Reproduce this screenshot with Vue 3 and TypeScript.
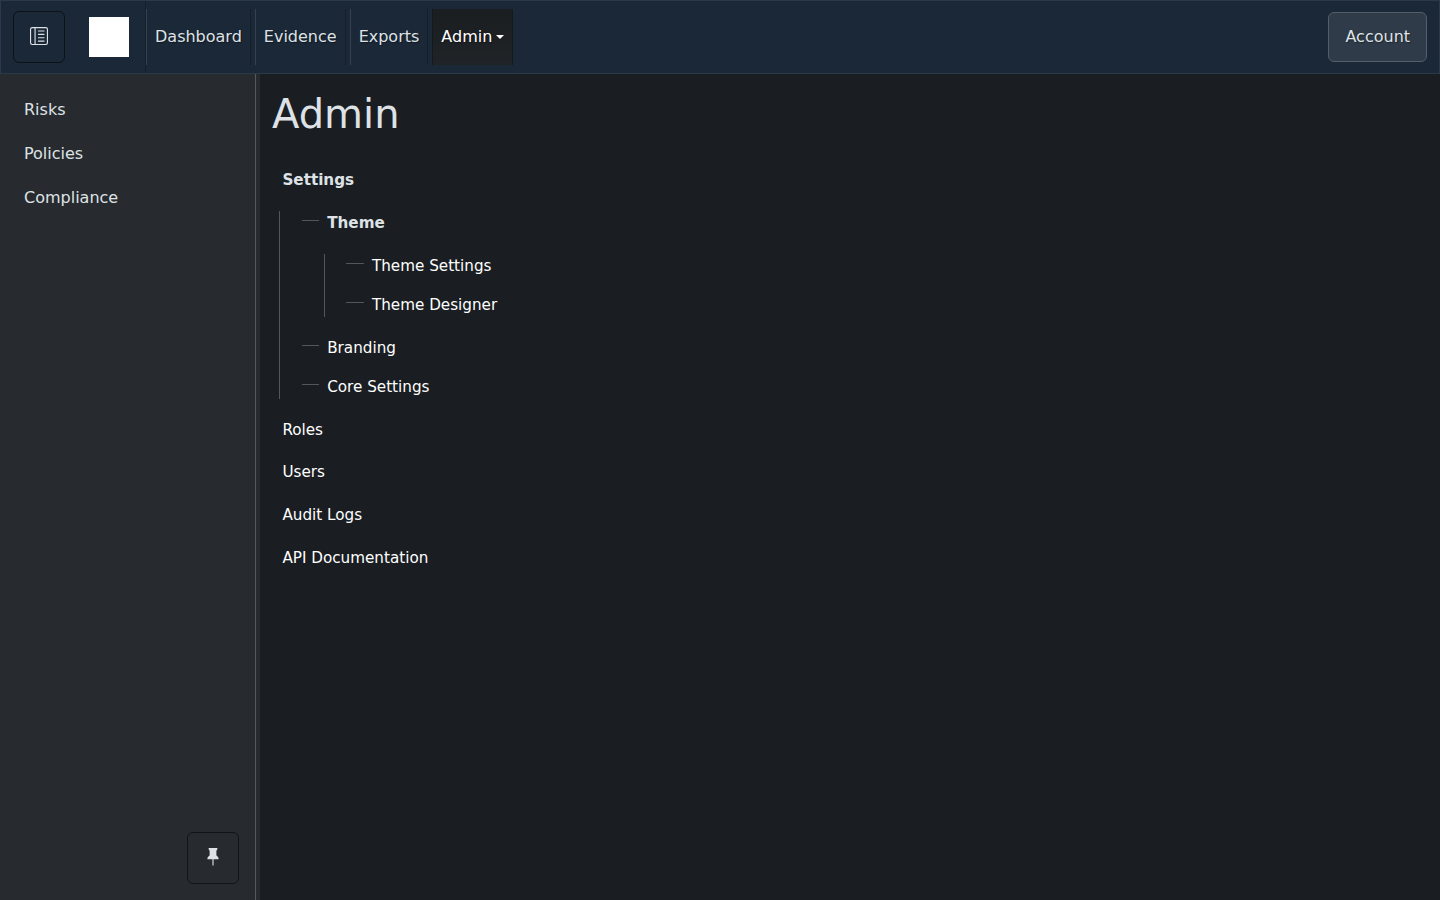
<script setup lang="ts">
interface NavItem { label: string; active?: boolean }
interface TreeRow { label: string; heading?: boolean; children?: TreeRow[] }

const nav: NavItem[] = [
  { label: 'Dashboard' },
  { label: 'Evidence' },
  { label: 'Exports' },
  { label: 'Admin', active: true },
]
const sidebar: string[] = ['Risks', 'Policies', 'Compliance']
const tree: TreeRow[] = [
  {
    label: 'Settings',
    heading: true,
    children: [
      { label: 'Theme', heading: true, children: [{ label: 'Theme Settings' }, { label: 'Theme Designer' }] },
      { label: 'Branding' },
      { label: 'Core Settings' },
    ],
  },
  { label: 'Roles' },
  { label: 'Users' },
  { label: 'Audit Logs' },
  { label: 'API Documentation' },
]
</script>

<template>
  <div class="app">
    <header class="navbar">
      <button class="icon-button" aria-label="Toggle sidebar">
        <svg viewBox="0 0 16 16" width="18" height="18" fill="currentColor">
          <path d="M12.5 3a.5.5 0 0 1 0 1h-5a.5.5 0 0 1 0-1zm0 3a.5.5 0 0 1 0 1h-5a.5.5 0 0 1 0-1zm.5 3.5a.5.5 0 0 0-.5-.5h-5a.5.5 0 0 0 0 1h5a.5.5 0 0 0 .5-.5m-.5 2.5a.5.5 0 0 1 0 1h-5a.5.5 0 0 1 0-1z" />
          <path d="M16 2a2 2 0 0 0-2-2H2a2 2 0 0 0-2 2v12a2 2 0 0 0 2 2h12a2 2 0 0 0 2-2zM4 1v14H2a1 1 0 0 1-1-1V2a1 1 0 0 1 1-1zm1 0h9a1 1 0 0 1 1 1v12a1 1 0 0 1-1 1H5z" />
        </svg>
      </button>
      <a class="brand"><span class="logo"></span></a>
      <nav class="nav">
        <a v-for="item in nav" :key="item.label" class="nav-link" :class="{ active: item.active }">
          {{ item.label }}<i v-if="item.active" class="caret"></i>
        </a>
      </nav>
      <button class="account">Account</button>
    </header>
    <div class="body">
      <aside class="sidebar">
        <div class="side-links">
          <a v-for="label in sidebar" :key="label">{{ label }}</a>
        </div>
        <button class="icon-button pin" aria-label="Pin sidebar">
          <svg viewBox="0 0 16 16" width="18" height="18" fill="currentColor">
            <path d="M4.146.146A.5.5 0 0 1 4.5 0h7a.5.5 0 0 1 .5.5c0 .68-.342 1.174-.646 1.479-.126.125-.25.224-.354.298v4.431l.078.048c.203.127.476.314.751.555C12.36 7.775 13 8.527 13 9.5a.5.5 0 0 1-.5.5h-4v4.5c0 .276-.224 1.5-.5 1.5s-.5-1.224-.5-1.5V10h-4a.5.5 0 0 1-.5-.5c0-.973.64-1.725 1.17-2.189A6 6 0 0 1 5 6.708V2.277a3 3 0 0 1-.354-.298C4.342 1.674 4 1.179 4 .5a.5.5 0 0 1 .146-.354" />
          </svg>
        </button>
      </aside>
      <div class="resizer"></div>
      <main class="main">
        <h1>Admin</h1>
        <ul class="tree">
          <li v-for="row in tree" :key="row.label">
            <div class="label" :class="{ heading: row.heading }">{{ row.label }}</div>
            <ul v-if="row.children" class="branch">
              <li v-for="child in row.children" :key="child.label">
                <div class="label twig" :class="{ heading: child.heading }">{{ child.label }}</div>
                <ul v-if="child.children" class="branch deep">
                  <li v-for="leaf in child.children" :key="leaf.label">
                    <div class="label twig">{{ leaf.label }}</div>
                  </li>
                </ul>
              </li>
            </ul>
          </li>
        </ul>
      </main>
    </div>
  </div>
</template>

<style>
body { margin: 0; background: #1a1e22; }
</style>

<style scoped>
* { box-sizing: border-box; }
.app {
  display: flex;
  flex-direction: column;
  height: 900px;
  overflow: hidden;
  color: #dee2e6;
  font: 16px/24px "DejaVu Sans", sans-serif;
}
button { font: inherit; color: inherit; margin: 0; }
.navbar {
  flex: none;
  display: flex;
  align-items: center;
  height: 74px;
  padding: 0 12px;
  background: #1b2837;
  border: 1px solid #2c3948;
}
.icon-button {
  display: flex;
  align-items: center;
  justify-content: center;
  width: 52px;
  height: 52px;
  padding: 0;
  background: transparent;
  border: 1px solid #0d1217;
  border-radius: 6px;
}
.navbar .icon-button svg { margin-top: -2px; }
.brand {
  display: flex;
  align-items: center;
  height: 72px;
  margin-left: 24px;
  padding-right: 16px;
  border-right: 1px solid #14202c;
}
.logo { width: 40px; height: 40px; background: #fff; }
.nav { display: flex; gap: 4px; }
.nav-link {
  display: flex;
  align-items: center;
  height: 56px;
  padding: 0 8px;
  border-left: 1px solid #35414e;
  border-right: 1px solid #141f2b;
  text-shadow: 1px 1px 1px rgba(0, 0, 0, 0.4);
}
.nav-link.active {
  color: #fff;
  background: linear-gradient(#1a1e20, #202327);
  border-color: #14191e;
}
.caret {
  margin-left: 4px;
  border-top: 4.8px solid;
  border-left: 4.8px solid transparent;
  border-right: 4.8px solid transparent;
}
.account {
  width: 99px;
  height: 50px;
  margin-left: auto;
  padding: 0 0 0 0.5px;
  background: #2f3b49;
  border: 1px solid #535e69;
  border-radius: 6px;
  text-shadow: 1px 1px 1px rgba(0, 0, 0, 0.4);
}
.body { flex: 1; display: flex; min-height: 0; }
.sidebar {
  display: flex;
  flex-direction: column;
  justify-content: space-between;
  width: 255px;
  padding: 24px 16px 16px 24px;
  background: #272b2f;
}
.side-links { display: flex; flex-direction: column; gap: 20px; }
.pin { align-self: flex-end; border-color: #121517; }
.pin svg { margin-top: -2px; margin-left: -1px; }
.resizer {
  width: 5px;
  background: #272b2f;
  border-left: 1px solid #55585b;
}
.main { flex: 1; padding: 16px 12px; background: #1a1e22; }
h1 { margin: 0; font-size: 40px; font-weight: 400; line-height: 48px; }
ul { list-style: none; margin: 0; padding: 0; }
.tree {
  display: flex;
  flex-direction: column;
  gap: 20px;
  margin: 30.4px 0 0 10.4px;
  font-size: 15.2px;
}
.label { height: 22.8px; line-height: 24.6px; color: #fff; }
.label.heading { color: #dee2e6; font-weight: 700; }
.branch {
  display: flex;
  flex-direction: column;
  gap: 16px;
  margin: 20px 0 -1.4px -3px;
  padding: 0 0 1.4px 21.6px;
  border-left: 1px solid #53575b;
}
.branch.deep { margin-bottom: 3px; margin-left: 21.8px; }
.twig { display: flex; align-items: flex-start; }
.twig::before {
  content: "";
  width: 17.4px;
  height: 1px;
  margin: 9px 7.8px 0 0;
  background: #53575b;
}
.deep .twig::before { margin-right: 8.2px; }
</style>
